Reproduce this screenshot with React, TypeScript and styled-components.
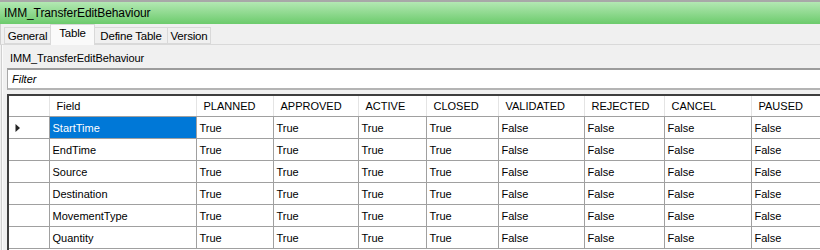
import React from "react";
import styled, { createGlobalStyle } from "styled-components";

const Global = createGlobalStyle`
  html, body { margin: 0; padding: 0; background: #f0f0f0; overflow: hidden; }
  body { font-family: "Liberation Sans", Arial, sans-serif; }
  #root { width: 820px; height: 250px; overflow: hidden; }
`;

const Window = styled.div`
  width: 900px;
  height: 250px;
  background: #f0f0f0;
  display: flex;
  flex-direction: column;
  font-family: "Liberation Sans", Arial, sans-serif;
  color: #000;
`;

const TitleBar = styled.div`
  height: 22px;
  border-top: 2px solid #a8a8a8;
  background: linear-gradient(#b3e8b3, #6ccb6c);
  display: flex;
  align-items: center;
  padding-left: 4px;
  font-size: 12px;
  letter-spacing: -0.1px;
`;

const TabStrip = styled.div`
  height: 20px;
  display: flex;
  align-items: flex-end;
  padding-left: 4px;
  border-bottom: 1px solid #d9d9d9;
  border-left: 1px solid #d0d0d0;
`;

const Tab = styled.div<{ $active?: boolean; $w: number }>`
  width: ${(p) => p.$w}px;
  height: ${(p) => (p.$active ? 21 : 17)}px;
  margin-bottom: ${(p) => (p.$active ? -1 : 0)}px;
  display: flex;
  justify-content: center;
  align-items: ${(p) => (p.$active ? "flex-start" : "center")};
  padding-top: ${(p) => (p.$active ? 2 : 0)}px;
  box-sizing: border-box;
  background: ${(p) => (p.$active ? "#fafafa" : "#f0f0f0")};
  border: 1px solid #d9d9d9;
  border-bottom: ${(p) => (p.$active ? "none" : "1px solid #d9d9d9")};
  margin-left: -1px;
  font-size: 11.5px;
  letter-spacing: -0.2px;
`;

const Page = styled.div`
  flex: 1;
  display: flex;
  flex-direction: column;
  border-left: 1px solid #d0d0d0;
  margin-left: 1px;
  padding-left: 5px;
  box-shadow: inset 1px 0 0 #fbfbfb;
`;

const Caption = styled.div`
  height: 14px;
  margin-top: 6px;
  padding-left: 3px;
  font-size: 11px;
  line-height: 14px;
  letter-spacing: -0.1px;
`;

const FilterBox = styled.div`
  margin-top: 3px;
  height: 22px;
  box-sizing: border-box;
  background: #fff;
  border-top: 2px solid #9c9c9c;
  border-bottom: 2px solid #b4b4b4;
  border-left: 1px solid #a8a8a8;
  display: flex;
  align-items: center;
  padding-left: 4px;
  font-size: 11px;
  font-style: italic;
`;

const GridWrap = styled.div`
  margin-top: 4px;
  flex: 1;
  background: #fff;
  border-top: 2px solid #3e3e3e;
  border-left: 2px solid #3e3e3e;
  overflow: hidden;
`;

const Table = styled.table`
  border-collapse: collapse;
  table-layout: fixed;
  font-size: 11px;
`;

const HeadCell = styled.th`
  height: 20px;
  padding: 0 0 0 7px;
  text-align: left;
  font-weight: normal;
  border-right: 1px solid #e4e4e4;
  border-bottom: 1px solid #a0a0a0;
  white-space: nowrap;
  overflow: hidden;
  background: #fff;
`;

const RowHead = styled.td`
  height: 21px;
  border-right: 1px solid #a0a0a0;
  border-bottom: 1px solid #a0a0a0;
  padding: 0 0 0 6px;
  background: #fff;
`;

const Cell = styled.td<{ $selected?: boolean }>`
  height: 21px;
  padding: 0 0 0 3px;
  border-right: 1px solid #a0a0a0;
  border-bottom: 1px solid #a0a0a0;
  background: ${(p) => (p.$selected ? "#0078d7" : "#fff")};
  color: ${(p) => (p.$selected ? "#fff" : "#000")};
  white-space: nowrap;
  overflow: hidden;
`;

const Arrow = () => (
  <svg width="6" height="10" viewBox="0 0 6 10" style={{ display: "block" }}>
    <path d="M0.5 1 L5 5 L0.5 9 Z" fill="#222" />
  </svg>
);

const widths = [40, 147, 77, 85, 68, 72, 86, 80, 87, 100];
const headers = ["PLANNED", "APPROVED", "ACTIVE", "CLOSED", "VALIDATED", "REJECTED", "CANCEL", "PAUSED"];
const fields = ["StartTime", "EndTime", "Source", "Destination", "MovementType", "Quantity"];
const values = ["True", "True", "True", "True", "False", "False", "False", "False"];

export default function App() {
  return (
    <>
      <Global />
      <Window>
        <TitleBar>IMM_TransferEditBehaviour</TitleBar>
        <TabStrip>
          <Tab $w={47}>General</Tab>
          <Tab $w={45} $active>Table</Tab>
          <Tab $w={74}>Define Table</Tab>
          <Tab $w={44}>Version</Tab>
        </TabStrip>
        <Page>
          <Caption>IMM_TransferEditBehaviour</Caption>
          <FilterBox>Filter</FilterBox>
          <GridWrap>
            <Table>
              <colgroup>
                {widths.map((w, i) => (
                  <col key={i} style={{ width: w }} />
                ))}
              </colgroup>
              <thead>
                <tr>
                  <HeadCell />
                  <HeadCell>Field</HeadCell>
                  {headers.map((h) => (
                    <HeadCell key={h}>{h}</HeadCell>
                  ))}
                </tr>
              </thead>
              <tbody>
                {fields.map((f, r) => (
                  <tr key={f}>
                    <RowHead>{r === 0 ? <Arrow /> : null}</RowHead>
                    <Cell $selected={r === 0}>{f}</Cell>
                    {values.map((v, i) => (
                      <Cell key={i}>{v}</Cell>
                    ))}
                  </tr>
                ))}
              </tbody>
            </Table>
          </GridWrap>
        </Page>
      </Window>
    </>
  );
}
